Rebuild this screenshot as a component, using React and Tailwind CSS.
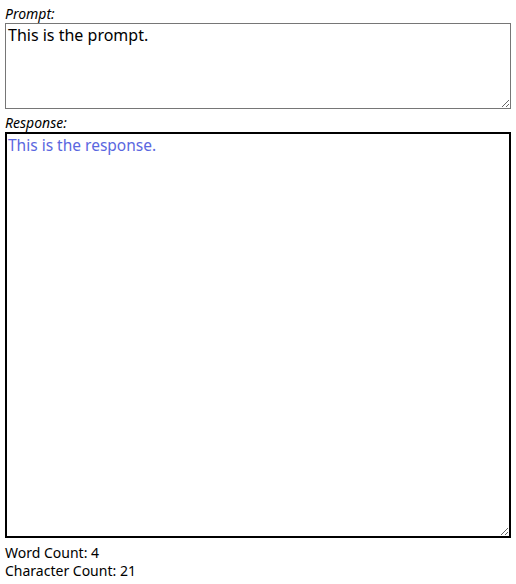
import { useState } from 'react';

function App() {
    const [prompt, setPrompt] = useState('This is the prompt.');
    const [response, setResponse] = useState('This is the response.');

    const words = response.trim() ? response.trim().split(/\s+/).length : 0;

    return (
        <div className="min-h-screen bg-white px-[5px] pt-[5px] font-['Noto_Sans',sans-serif] text-[14px] leading-[18px] text-black">
            <label className="block italic">Prompt:</label>
            <textarea
                value={prompt}
                onChange={(e) => setPrompt(e.target.value)}
                className="block h-[86px] w-[506px] border border-[#767676] px-[2px] py-[1px] text-[16px] leading-[20px] outline-none"
            />
            <label className="mt-[5px] block italic">Response:</label>
            <textarea
                autoFocus
                value={response}
                onChange={(e) => setResponse(e.target.value)}
                className="block h-[406px] w-[506px] border-2 border-black px-[1px] py-[1px] text-[15.5px] leading-[20px] text-[#5a67e0] caret-[#1d4ed8] outline-none"
            />
            <div className="mt-[6px]">Word Count: {words}</div>
            <div>Character Count: {response.length}</div>
        </div>
    );
}

export default App;
